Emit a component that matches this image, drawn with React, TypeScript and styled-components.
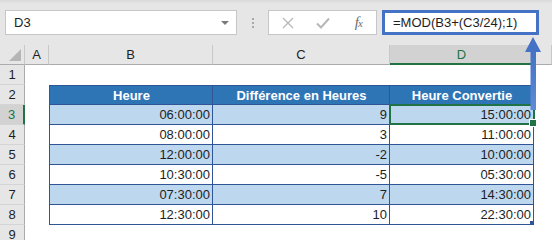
import React from "react";
import styled, { createGlobalStyle } from "styled-components";

const Global = createGlobalStyle`
  html, body { margin: 0; padding: 0; background: #ffffff; }
  * { box-sizing: border-box; }
`;

const FONT = `"Liberation Sans", Arial, sans-serif`;
const BLUE_LINE = "#2f5597";
const GREEN = "#217346";

const Frame = styled.div`
  position: relative;
  width: 552px;
  height: 240px;
  overflow: hidden;
  font-family: ${FONT};
  font-size: 13px;
  color: #1e1e1e;
  background: #ffffff;
`;

const Toolbar = styled.div`
  display: flex;
  align-items: flex-start;
  height: 45px;
  padding: 10px 0 0 5px;
  background: linear-gradient(#d9d9d9 0px, #e6e6e6 4px, #e6e6e6 100%);
`;

const NameBox = styled.div`
  display: flex;
  align-items: center;
  justify-content: space-between;
  width: 232px;
  height: 25px;
  padding: 0 7px 0 8px;
  background: #ffffff;
  border: 1px solid #c6c6c6;
  line-height: 23px;
`;

const DropCaret = styled.span`
  width: 0;
  height: 0;
  border-left: 4px solid transparent;
  border-right: 4px solid transparent;
  border-top: 4px solid #7a7a7a;
`;

const Grip = styled.div`
  display: flex;
  flex-direction: column;
  align-items: center;
  justify-content: center;
  gap: 2px;
  width: 31px;
  height: 25px;
  & > span {
    width: 2px;
    height: 2px;
    background: #a8a8a8;
  }
`;

const FxBox = styled.div`
  display: flex;
  align-items: center;
  width: 109px;
  height: 25px;
  padding-left: 1px;
  background: #ffffff;
  border: 1px solid #c6c6c6;
`;

const FxButton = styled.div`
  display: flex;
  align-items: center;
  justify-content: center;
  width: 36px;
  height: 23px;
`;

const FxLabel = styled.span`
  font-family: "Liberation Serif", "Times New Roman", serif;
  font-style: italic;
  font-size: 15px;
  color: #6e6e6e;
  letter-spacing: -1px;
  & > small {
    font-size: 11px;
  }
`;

const FormulaBox = styled.div`
  width: 157px;
  height: 25px;
  margin-left: 5px;
  padding-left: 8px;
  background: #ffffff;
  border: 3px solid #4472c4;
  line-height: 19px;
  white-space: nowrap;
`;

const HeaderRow = styled.div`
  display: flex;
  height: 20px;
  background: #e6e6e6;
`;

const Corner = styled.div`
  display: flex;
  align-items: flex-end;
  justify-content: flex-end;
  width: 25px;
  padding: 0 3px 3px 0;
  border-right: 1px solid #c8c8c8;
  border-bottom: 1px solid #ababab;
`;

const ColHead = styled.div<{ $w?: number; $sel?: boolean }>`
  ${(p) => (p.$w ? `width: ${p.$w}px;` : "flex: 1;")}
  text-align: center;
  line-height: 20px;
  background: ${(p) => (p.$sel ? "#d2d2d2" : "#e6e6e6")};
  color: ${(p) => (p.$sel ? GREEN : "#1e1e1e")};
  border-right: 1px solid #c8c8c8;
  border-bottom: ${(p) => (p.$sel ? `2px solid ${GREEN}` : "1px solid #ababab")};
`;

const Row = styled.div`
  display: flex;
  height: 20px;
`;

const RowHead = styled.div<{ $sel?: boolean }>`
  width: 25px;
  text-align: center;
  line-height: 19px;
  background: ${(p) => (p.$sel ? "#d2d2d2" : "#e6e6e6")};
  color: ${(p) => (p.$sel ? GREEN : "#1e1e1e")};
  border-right: ${(p) => (p.$sel ? `2px solid ${GREEN}` : "1px solid #ababab")};
  border-bottom: 1px solid #d4d4d4;
`;

type CellProps = {
  $w?: number;
  $fill?: string;
  $head?: boolean;
  $table?: boolean;
  $first?: boolean;
  $top?: boolean;
};

const Cell = styled.div<CellProps>`
  position: relative;
  ${(p) => (p.$w ? `width: ${p.$w}px;` : "flex: 1;")}
  height: 20px;
  padding: 0 2px 0 3px;
  white-space: nowrap;
  background: ${(p) => p.$fill || "#ffffff"};
  text-align: ${(p) => (p.$head ? "center" : "right")};
  font-weight: ${(p) => (p.$head ? 700 : 400)};
  color: ${(p) => (p.$head ? "#ffffff" : "#1e1e1e")};
  line-height: ${(p) => (p.$head ? "21px" : "19px")};
  ${(p) =>
    p.$table
      ? `border-right: 1px solid ${BLUE_LINE}; border-bottom: 1px solid ${BLUE_LINE};`
      : ""}
  ${(p) => (p.$first ? `border-left: 1px solid ${BLUE_LINE};` : "")}
  ${(p) => (p.$top ? `border-top: 1px solid ${BLUE_LINE}; line-height: 20px;` : "")}
`;

/* active-cell outline drawn over D3 */
const ActiveOutline = styled.div`
  position: absolute;
  z-index: 2;
  left: -1px;
  top: -1px;
  right: -2px;
  bottom: -1px;
  border: 2px solid ${GREEN};
  pointer-events: none;
  &::after {
    content: "";
    position: absolute;
    right: -4px;
    bottom: -4px;
    width: 6px;
    height: 6px;
    background: ${GREEN};
    border: 1px solid #ffffff;
  }
`;

/* little resize grip at the table's bottom-right corner */
const TableGrip = styled.div`
  position: absolute;
  z-index: 2;
  right: -1px;
  bottom: -1px;
  width: 4px;
  height: 4px;
  background: ${BLUE_LINE};
`;

const Pointer = styled.svg`
  position: absolute;
  z-index: 3;
  left: 524px;
  top: 36px;
`;

const COLS = { A: 24, B: 164, C: 177, D: 144 };

const data: [string, string, string][] = [
  ["06:00:00", "9", "15:00:00"],
  ["08:00:00", "3", "11:00:00"],
  ["12:00:00", "-2", "10:00:00"],
  ["10:30:00", "-5", "05:30:00"],
  ["07:30:00", "7", "14:30:00"],
  ["12:30:00", "10", "22:30:00"],
];

const BAND = "#bdd7ee";
const HEAD = "#2e75b6";

function EmptyRow({ n }: { n: number }) {
  return (
    <Row>
      <RowHead>{n}</RowHead>
      <Cell $w={COLS.A} />
      <Cell $w={COLS.B} />
      <Cell $w={COLS.C} />
      <Cell $w={COLS.D} />
      <Cell />
    </Row>
  );
}

export default function App() {
  return (
    <Frame>
      <Global />
      <Toolbar>
        <NameBox>
          <span>D3</span>
          <DropCaret />
        </NameBox>
        <Grip>
          <span />
          <span />
          <span />
        </Grip>
        <FxBox>
          <FxButton>
            <svg width="12" height="12" viewBox="0 0 12 12">
              <path d="M1 1 L11 11 M11 1 L1 11" stroke="#b8b8b8" strokeWidth="1.3" fill="none" />
            </svg>
          </FxButton>
          <FxButton>
            <svg width="14" height="12" viewBox="0 0 14 12">
              <path d="M1 6.5 L5 10.5 L13 1.5" stroke="#b8b8b8" strokeWidth="2" fill="none" />
            </svg>
          </FxButton>
          <FxButton>
            <FxLabel>
              f<small>x</small>
            </FxLabel>
          </FxButton>
        </FxBox>
        <FormulaBox>=MOD(B3+(C3/24);1)</FormulaBox>
      </Toolbar>

      <HeaderRow>
        <Corner>
          <svg width="12" height="12" viewBox="0 0 12 12">
            <polygon points="0,12 12,0 12,12" fill="#b5b5b5" />
          </svg>
        </Corner>
        <ColHead $w={COLS.A}>A</ColHead>
        <ColHead $w={COLS.B}>B</ColHead>
        <ColHead $w={COLS.C}>C</ColHead>
        <ColHead $w={COLS.D} $sel>
          D
        </ColHead>
        <ColHead />
      </HeaderRow>

      <EmptyRow n={1} />

      <Row>
        <RowHead>2</RowHead>
        <Cell $w={COLS.A} />
        <Cell $w={COLS.B} $fill={HEAD} $head $table $first $top>
          Heure
        </Cell>
        <Cell $w={COLS.C} $fill={HEAD} $head $table $top>
          Différence en Heures
        </Cell>
        <Cell $w={COLS.D} $fill={HEAD} $head $table $top>
          Heure Convertie
        </Cell>
        <Cell />
      </Row>

      {data.map(([t, diff, out], i) => {
        const fill = i % 2 === 0 ? BAND : "#ffffff";
        const last = i === data.length - 1;
        return (
          <Row key={i}>
            <RowHead $sel={i === 0}>{i + 3}</RowHead>
            <Cell $w={COLS.A} />
            <Cell $w={COLS.B} $fill={fill} $table $first>
              {t}
            </Cell>
            <Cell $w={COLS.C} $fill={fill} $table>
              {diff}
            </Cell>
            <Cell $w={COLS.D} $fill={fill} $table>
              {out}
              {i === 0 && <ActiveOutline />}
              {last && <TableGrip />}
            </Cell>
            <Cell />
          </Row>
        );
      })}

      <EmptyRow n={9} />

      <Pointer width="18" height="76" viewBox="0 0 18 76">
        <defs>
          <linearGradient id="shaft" x1="0" y1="0" x2="0" y2="1">
            <stop offset="0" stopColor="#4472c4" />
            <stop offset="1" stopColor="#5f8ad6" />
          </linearGradient>
        </defs>
        <rect x="6.5" y="15" width="5.5" height="59" fill="url(#shaft)" />
        <polygon points="9,1 1,16 17,16" fill="#4472c4" />
      </Pointer>
    </Frame>
  );
}
